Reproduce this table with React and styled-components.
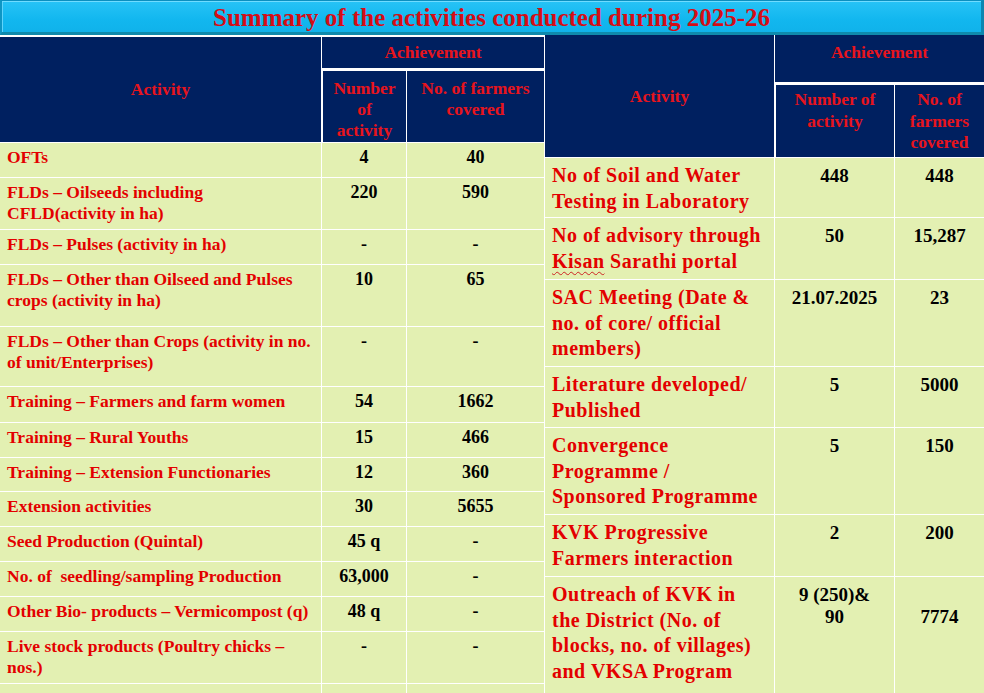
import React from "react";
import styled, { createGlobalStyle } from "styled-components";

const Global = createGlobalStyle`
  html, body { margin: 0; padding: 0; background: #ffffff; }
  body { font-family: "Liberation Serif", "Times New Roman", serif; }
`;

const Page = styled.div`
  width: 984px;
  height: 693px;
  overflow: hidden;
  background: #ffffff;
  display: flex;
  flex-direction: column;
`;

const TitleBar = styled.div`
  flex-shrink: 0;
  height: 35px;
  box-sizing: border-box;
  background: linear-gradient(#27c3f6 0%, #12b7ef 60%, #10b2ea 100%);
  border-top: 1px solid #0b8fbf;
  border-left: 2px solid #0e96c4;
  border-right: 3px solid #0c86b0;
  border-bottom: 3px solid #0f8aac;
  box-shadow: inset 0 1px 0 #6fdcff, inset 1px 0 0 #5fd4fb;
  display: flex;
  align-items: center;
  justify-content: center;
`;

const Title = styled.h1`
  margin: 0;
  font-family: "Liberation Serif", "Times New Roman", serif;
  font-weight: bold;
  font-size: 25px;
  line-height: 1;
  color: #d40d16;
  white-space: nowrap;
  padding-top: 2px;
`;

const Tables = styled.div`
  flex-shrink: 0;
  display: flex;
  align-items: flex-start;
  gap: 1px;
`;

const Grid = styled.div`
  display: grid;
  grid-template-columns: ${(p) => p.$cols};
  grid-template-rows: ${(p) => p.$rows};
  gap: 1px;
  background: #ffffff;
  margin-top: ${(p) => p.$top || 0}px;
`;

const HeadCell = styled.div`
  background: #002060;
  color: #e8141c;
  font-weight: bold;
  font-size: 17.5px;
  line-height: ${(p) => p.$lh || 21}px;
  text-align: center;
  display: flex;
  flex-direction: column;
  justify-content: ${(p) => (p.$center ? "center" : "flex-start")};
  padding-top: ${(p) => (p.$center ? 0 : p.$pt || 6)}px;
  box-sizing: border-box;
  grid-row: ${(p) => p.$row || "auto"};
  grid-column: ${(p) => p.$col || "auto"};
  border-bottom: ${(p) => (p.$lineBelow ? "2px solid #ffffff" : "none")};
  border-left: ${(p) => (p.$lineLeft ? "1px solid #ffffff" : "none")};
  white-space: nowrap;
`;

const LabelCell = styled.div`
  background: #e3f0b2;
  color: #e30000;
  font-weight: bold;
  font-size: ${(p) => (p.$big ? 20 : 17.5)}px;
  line-height: ${(p) => (p.$big ? 25.5 : 21)}px;
  letter-spacing: ${(p) => (p.$big ? 0.5 : 0)}px;
  padding: ${(p) => (p.$big ? "5px 7px 0" : "4px 7px 0")};
  white-space: pre;
  box-sizing: border-box;
`;

const NumCell = styled.div`
  background: #e3f0b2;
  color: #000000;
  font-weight: bold;
  font-size: ${(p) => (p.$big ? 19 : 18)}px;
  line-height: ${(p) => (p.$big ? 22 : 21)}px;
  padding-top: ${(p) => (p.$big ? 7 : 4) + (p.$drop || 0)}px;
  text-align: center;
  white-space: nowrap;
  box-sizing: border-box;
`;

const Spell = styled.span`
  text-decoration: underline wavy #c22;
  text-decoration-thickness: 1px;
  text-underline-offset: 3px;
`;

const leftRows = [
  [["OFTs"], "4", "40", 34],
  [["FLDs – Oilseeds including", "CFLD(activity in ha)"], "220", "590", 51],
  [["FLDs – Pulses (activity in ha)"], "-", "-", 34],
  [["FLDs – Other than Oilseed and Pulses", "crops (activity in ha)"], "10", "65", 61],
  [["FLDs – Other than Crops (activity in no.", "of unit/Enterprises)"], "-", "-", 59],
  [["Training – Farmers and farm women"], "54", "1662", 35],
  [["Training – Rural Youths"], "15", "466", 34],
  [["Training – Extension Functionaries"], "12", "360", 33],
  [["Extension activities"], "30", "5655", 34],
  [["Seed Production (Quintal)"], "45 q", "-", 34],
  [["No. of  seedling/sampling Production"], "63,000", "-", 34],
  [["Other Bio- products – Vermicompost (q)"], "48 q", "-", 34],
  [["Live stock products (Poultry chicks –", "nos.)"], "-", "-", 51],
  [[""], "", "", 40],
];

const rightRows = [
  [["No of Soil and Water", "Testing in Laboratory"], ["448"], "448", 59],
  [["No of advisory through", "__KISAN__"], ["50"], "15,287", 61],
  [["SAC Meeting (Date &", "no. of core/ official", "members)"], ["21.07.2025"], "23", 86],
  [["Literature developed/", "Published"], ["5"], "5000", 60],
  [["Convergence", "Programme /", "Sponsored Programme"], ["5"], "150", 86],
  [["KVK Progressive", "Farmers interaction"], ["2"], "200", 61],
  [
    ["Outreach of KVK in", "the District (No. of", "blocks, no. of villages)", "and VKSA Program"],
    ["9 (250)&", "90"],
    "7774",
    130,
    22,
  ],
];

const renderLines = (lines) =>
  lines.map((l, i) => (
    <React.Fragment key={i}>
      {i > 0 && <br />}
      {l === "__KISAN__" ? (
        <>
          <Spell>Kisan</Spell> Sarathi portal
        </>
      ) : (
        l
      )}
    </React.Fragment>
  ));

export default function App() {
  const leftTemplate = ["33px", "71px", ...leftRows.map((r) => `${r[3]}px`)].join(" ");
  const rightTemplate = ["49px", "72px", ...rightRows.map((r) => `${r[3]}px`)].join(" ");
  return (
    <>
      <Global />
      <Page>
        <TitleBar>
          <Title>Summary of the activities conducted during 2025-26</Title>
        </TitleBar>
        <Tables>
          <Grid $cols="321px 84px 137px" $rows={leftTemplate} $top={2}>
            <HeadCell $row="1 / span 2" $center>
              Activity
            </HeadCell>
            <HeadCell $col="2 / span 2" $center $lineBelow>
              Achievement
            </HeadCell>
            <HeadCell $pt={7} $lineLeft>
              <span>Number</span>
              <span>of</span>
              <span>activity</span>
            </HeadCell>
            <HeadCell $pt={7}>
              <span>No. of farmers</span>
              <span>covered</span>
            </HeadCell>
            {leftRows.map((r, i) => (
              <React.Fragment key={i}>
                <LabelCell>{renderLines(r[0])}</LabelCell>
                <NumCell>{r[1]}</NumCell>
                <NumCell>{r[2]}</NumCell>
              </React.Fragment>
            ))}
          </Grid>
          <Grid $cols="229px 119px 89px" $rows={rightTemplate}>
            <HeadCell $row="1 / span 2" $center>
              Activity
            </HeadCell>
            <HeadCell $col="2 / span 2" $pt={7} $lineBelow>
              Achievement
            </HeadCell>
            <HeadCell $pt={4} $lh={21.5} $lineLeft>
              <span>Number of</span>
              <span>activity</span>
            </HeadCell>
            <HeadCell $pt={4} $lh={21.5}>
              <span>No. of</span>
              <span>farmers</span>
              <span>covered</span>
            </HeadCell>
            {rightRows.map((r, i) => (
              <React.Fragment key={i}>
                <LabelCell $big>{renderLines(r[0])}</LabelCell>
                <NumCell $big>{renderLines(r[1])}</NumCell>
                <NumCell $big $drop={r[4] || 0}>
                  {r[2]}
                </NumCell>
              </React.Fragment>
            ))}
          </Grid>
        </Tables>
      </Page>
    </>
  );
}
